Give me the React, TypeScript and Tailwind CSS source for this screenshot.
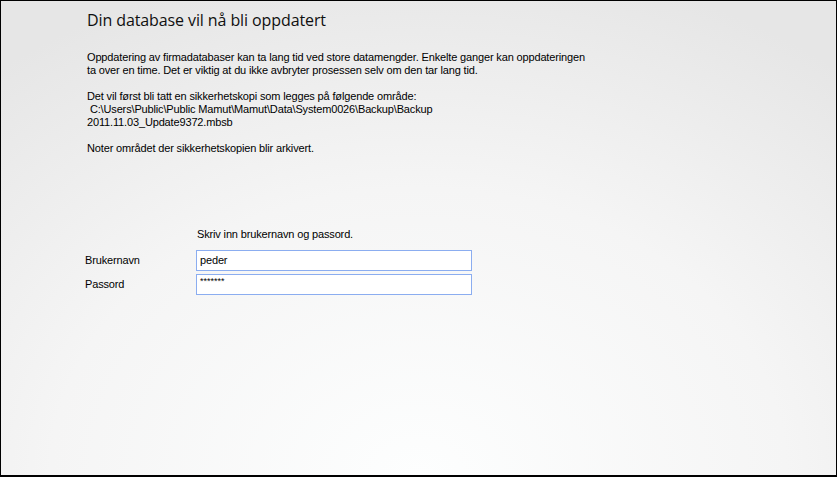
export default function App() {
  return (
    <div className="w-[837px] h-[477px] overflow-hidden border-x border-t border-b-2 border-black bg-[radial-gradient(ellipse_80%_110%_at_50%_100%,#fdfefe_0%,#f5f5f5_55%,#e6e6e6_100%)] text-black font-['Liberation_Sans',Arial,sans-serif]">
      <div className="pl-[86px] pt-[8px]">
        <h1 className="text-[16px] leading-[22px] tracking-[-0.1px] font-['Open_Sans','Noto_Sans',sans-serif] text-[#101010]">
          Din database vil nå bli oppdatert
        </h1>

        <div className="mt-[20px] text-[11px] leading-[13px] tracking-[-0.15px]">
          <p>
            Oppdatering av firmadatabaser kan ta lang tid ved store datamengder. Enkelte ganger kan oppdateringen
            <br />
            ta over en time. Det er viktig at du ikke avbryter prosessen selv om den tar lang tid.
          </p>
          <p className="mt-[13px]">
            Det vil først bli tatt en sikkerhetskopi som legges på følgende område:
            <br />
            &nbsp;C:\Users\Public\Public Mamut\Mamut\Data\System0026\Backup\Backup
            <br />
            2011.11.03_Update9372.mbsb
          </p>
          <p className="mt-[13px]">Noter området der sikkerhetskopien blir arkivert.</p>
        </div>
      </div>

      <div className="pl-[84px] mt-[73px] text-[11px] leading-[13px] tracking-[-0.15px]">
        <div className="pl-[112px]">Skriv inn brukernavn og passord.</div>
        <div className="mt-[9px] grid grid-cols-[111px_276px] gap-y-[3px] items-center">
          <span>Brukernavn</span>
          <div className="h-[21px] border border-[#8badf0] bg-white px-[3px] flex items-center">peder</div>
          <span>Passord</span>
          <div className="h-[21px] border border-[#8badf0] bg-white px-[3px] pt-[1px] text-[9px] leading-[10px] tracking-[0px]">*******</div>
        </div>
      </div>
    </div>
  );
}
